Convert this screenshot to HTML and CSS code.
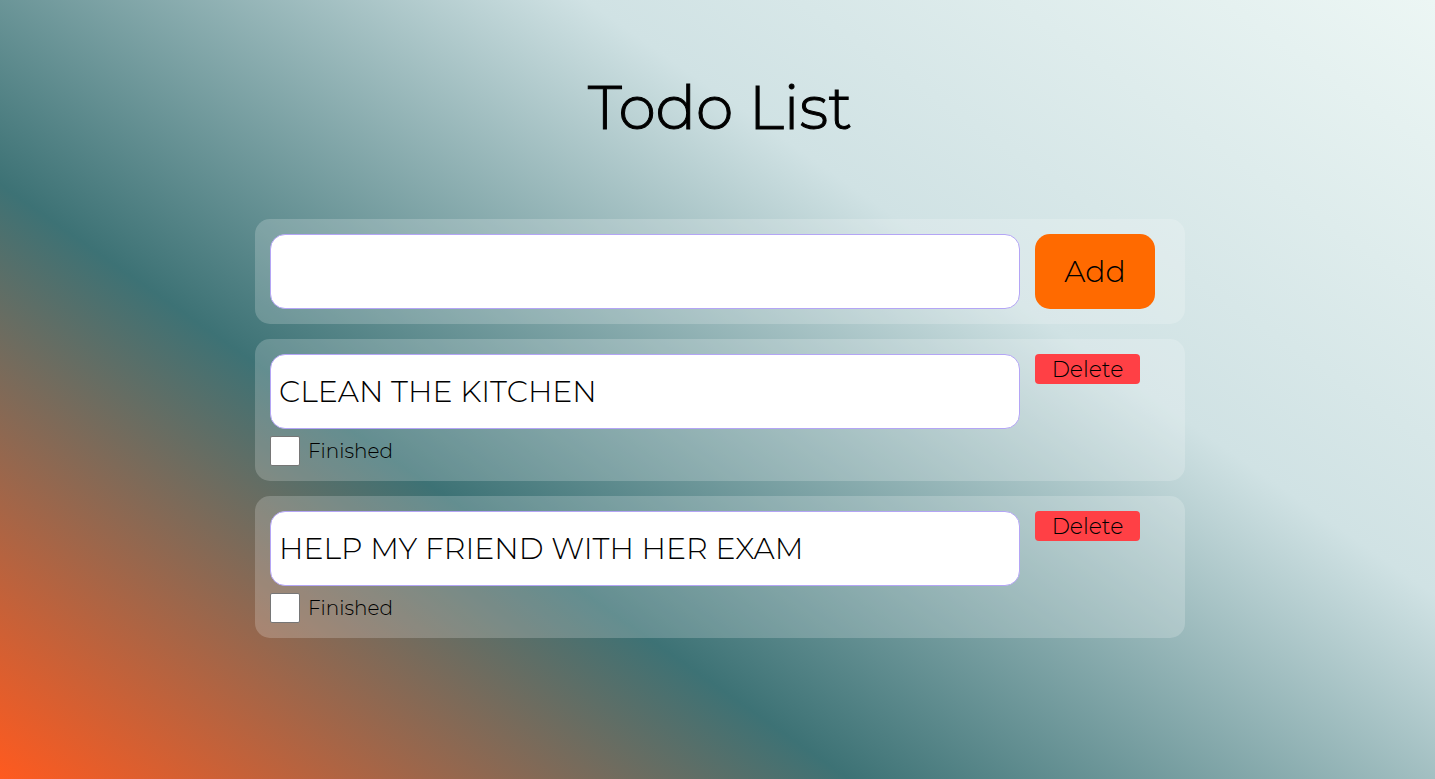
FILE: index.html
```
<!DOCTYPE html>
<html lang="en">
<head>
<meta charset="utf-8">
<meta name="viewport" content="width=device-width, initial-scale=1">
<title>Todo List</title>
<link rel="stylesheet" href="styles.css">
</head>
<body>
<main class="page">
  <h1 class="title">Todo List</h1>
  <form class="card">
    <input class="field" type="text" aria-label="New todo">
    <div class="actions"><button class="add" type="button">Add</button></div>
  </form>
  <section class="card">
    <div class="todo">
      <input class="field" type="text" aria-label="Todo" value="CLEAN THE KITCHEN">
      <label class="status"><input class="check" type="checkbox">Finished</label>
    </div>
    <div class="actions"><button class="delete" type="button">Delete</button></div>
  </section>
  <section class="card">
    <div class="todo">
      <input class="field" type="text" aria-label="Todo" value="HELP MY FRIEND WITH HER EXAM">
      <label class="status"><input class="check" type="checkbox">Finished</label>
    </div>
    <div class="actions"><button class="delete" type="button">Delete</button></div>
  </section>
</main>
</body>
</html>
```
FILE: styles.css
```
* {
  box-sizing: border-box;
}

body {
  margin: 0;
  min-height: 100vh;
  background: linear-gradient(35deg, #ff5a1f, #3d7275, #d0e2e4, #ecf6f4);
  color: #000;
  font-family: Montserrat, Inter, sans-serif;
  font-weight: 300;
}

.page {
  display: flex;
  flex-direction: column;
  align-items: center;
  gap: 15px;
  padding: 68px 0 15px 5px;
}

.title {
  margin: 0 0 56px;
  font-size: 60px;
  font-weight: 300;
  line-height: 80px;
  -webkit-text-stroke: 1px #000;
}

.card {
  display: flex;
  gap: 15px;
  width: 100%;
  max-width: 930px;
  padding: 15px;
  border-radius: 15px;
  background: rgba(255, 255, 255, 0.2);
}

.todo {
  display: flex;
  flex: 1;
  flex-direction: column;
  gap: 7px;
  min-width: 0;
}

.field {
  flex: 1;
  width: 100%;
  min-width: 0;
  min-height: 75px;
  padding: 0 8px;
  border: 1px solid #b4a5f5;
  border-radius: 15px;
  background: #fff;
  color: inherit;
  font: inherit;
  font-size: 30px;
}

.actions {
  flex: 0 0 135px;
}

.add,
.delete {
  display: block;
  padding: 0;
  border: 0;
  color: inherit;
  font: inherit;
}

.add {
  width: 120px;
  height: 75px;
  border-radius: 15px;
  background: #ff6a00;
  font-size: 30px;
}

.delete {
  width: 105px;
  height: 30px;
  border-radius: 4px;
  background: #ff4045;
  font-size: 22px;
}

.status {
  display: flex;
  align-items: center;
  align-self: flex-start;
  gap: 8px;
  font-size: 20px;
  line-height: 30px;
}

.check {
  width: 30px;
  height: 30px;
  margin: 0;
  border: 1px solid #767676;
  border-radius: 2px;
  background: #fff;
  appearance: none;
}

.check:checked {
  background: #ff6a00;
}
```
